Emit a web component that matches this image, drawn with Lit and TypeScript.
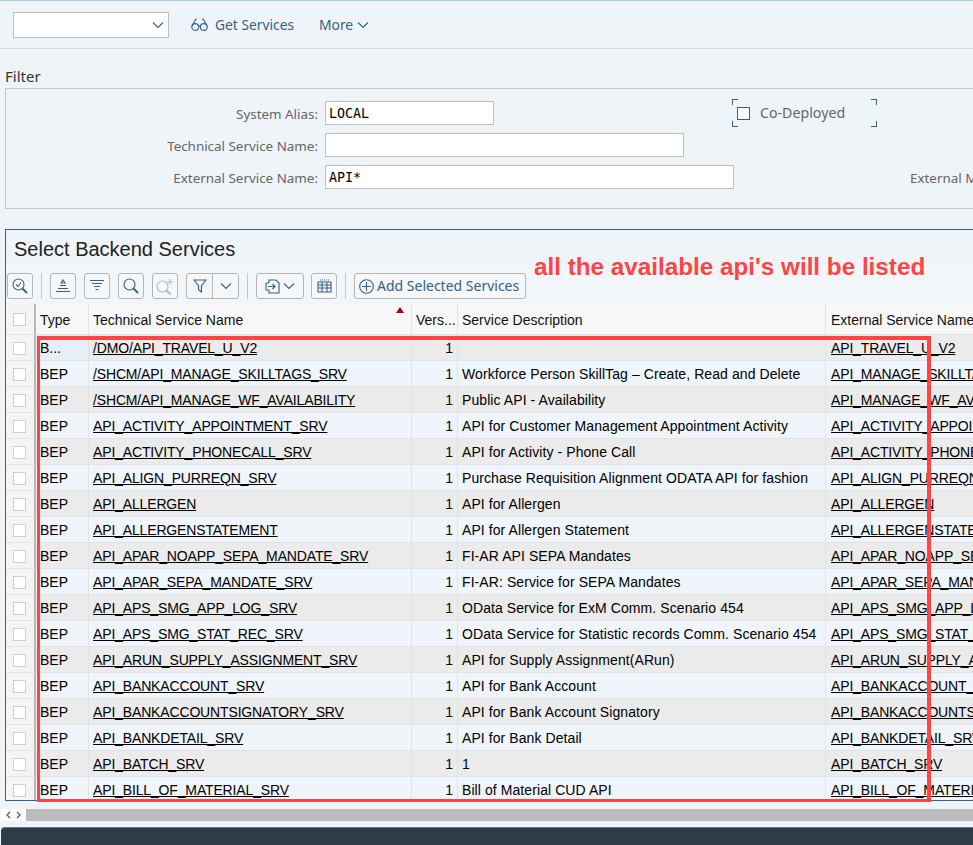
import { LitElement, html, css, svg } from "lit";
import { customElement } from "lit/decorators.js";

const rows: [string, string, string, string?, string?][] = [
  ["B...", "/DMO/API_TRAVEL_U_V2", "", "API_TRAVEL_U_V2"],
  ["BEP", "/SHCM/API_MANAGE_SKILLTAGS_SRV", "Workforce Person SkillTag – Create, Read and Delete", "API_MANAGE_SKILLTAGS_SRV"],
  ["BEP", "/SHCM/API_MANAGE_WF_AVAILABILITY", "Public API - Availability", "API_MANAGE_WF_AVAILABILITY"],
  ["BEP", "API_ACTIVITY_APPOINTMENT_SRV", "API for Customer Management Appointment Activity"],
  ["BEP", "API_ACTIVITY_PHONECALL_SRV", "API for Activity - Phone Call"],
  ["BEP", "API_ALIGN_PURREQN_SRV", "Purchase Requisition Alignment ODATA API for fashion"],
  ["BEP", "API_ALLERGEN", "API for Allergen"],
  ["BEP", "API_ALLERGENSTATEMENT", "API for Allergen Statement"],
  ["BEP", "API_APAR_NOAPP_SEPA_MANDATE_SRV", "FI-AR API SEPA Mandates"],
  ["BEP", "API_APAR_SEPA_MANDATE_SRV", "FI-AR: Service for SEPA Mandates"],
  ["BEP", "API_APS_SMG_APP_LOG_SRV", "OData Service for ExM Comm. Scenario 454"],
  ["BEP", "API_APS_SMG_STAT_REC_SRV", "OData Service for Statistic records Comm. Scenario 454"],
  ["BEP", "API_ARUN_SUPPLY_ASSIGNMENT_SRV", "API for Supply Assignment(ARun)"],
  ["BEP", "API_BANKACCOUNT_SRV", "API for Bank Account"],
  ["BEP", "API_BANKACCOUNTSIGNATORY_SRV", "API for Bank Account Signatory"],
  ["BEP", "API_BANKDETAIL_SRV", "API for Bank Detail"],
  ["BEP", "API_BATCH_SRV", "1"],
  ["BEP", "API_BILL_OF_MATERIAL_SRV", "Bill of Material CUD API"],
];

const icon = (w: number, h: number, body: unknown) => html`<svg class="ic" width=${w} height=${h} viewBox="0 0 ${w} ${h}" fill="none" stroke="#346187" stroke-width="1.1">${body}</svg>`;

const chevron = icon(12, 8, svg`<path d="M1 1.5 L6 6.5 L11 1.5"/>`);
const glasses = icon(17, 14, svg`<circle cx="4.2" cy="9" r="3.4"/><circle cx="12.8" cy="9" r="3.4"/><path d="M7.6 8.5 Q8.5 7.3 9.4 8.5 M1 8 L4.5 1.2 H6 M16 8 L12.5 1.2 H11"/>`);
const searchCheck = icon(16, 16, svg`<circle cx="6.5" cy="6.5" r="5.5"/><path d="M10.5 10.5 L15 15" stroke-width="1.8"/><path d="M4 6.5 L6 8.5 L9 4.5"/>`);
const sortAsc = icon(16, 14, svg`<path d="M8 1 L10 4 H6 Z M5 6.5 H11 M3 9.5 H13 M1 12.5 H15"/>`);
const sortDesc = icon(16, 14, svg`<path d="M1 1.5 H15 M3 4.5 H13 M5 7.5 H11 M6.5 10.5 H9.5 M8 13 V13"/>`);
const search = icon(16, 16, svg`<circle cx="6.5" cy="6.5" r="5.5"/><path d="M10.5 10.5 L15 15" stroke-width="1.8"/>`);
const searchPlus = html`<svg class="ic" width="18" height="17" viewBox="0 0 18 17" fill="none" stroke="#a9bccb" stroke-width="1.1"><circle cx="6.5" cy="8.5" r="5.5"/><path d="M10.5 12.5 L15 16.5" stroke-width="1.8"/><path d="M14 1 V7 M11 4 H17"/></svg>`;
const funnel = icon(14, 14, svg`<path d="M1 1 H13 L8.4 7 V13 L5.6 10.8 V7 Z"/>`);
const exportIc = icon(15, 15, svg`<path d="M4 4 V1 H11 L14 4 V14 H4 V11 M1 4 H4 M1 4 V11 H4 M3 7.5 H10 M7.5 5 L10 7.5 L7.5 10"/>`);
const grid = icon(15, 14, svg`<path d="M1 3 H14 V13 H1 Z M1 6 H14 M1 9 H14 M5 3 V13 M10 3 V13"/><path d="M3 1 H12" stroke-dasharray="1 1"/>`);
const plus = icon(15, 15, svg`<circle cx="7.5" cy="7.5" r="6.8"/><path d="M7.5 3 V12 M3 7.5 H12"/>`);

@customElement("app-root")
export class AppRoot extends LitElement {
  static styles = css`
    :host { display: block; width: 973px; height: 845px; overflow: hidden; position: relative; background: #eff4f9; font-family: "Liberation Sans", Arial, sans-serif; color: #000; }
    .ic { display: block; flex: none; }
    .top { height: 47px; border-top: 1px solid #a9c9e8; border-bottom: 1px solid #c9def2; display: flex; align-items: center; padding-left: 13px; font-family: "Noto Sans", sans-serif; font-size: 13.8px; color: #346187; box-sizing: content-box; }
    .select { height: 24px; background: #fff; border: 1px solid #bfbfbf; display: flex; align-items: center; justify-content: flex-end; padding-right: 4px; box-sizing: content-box; width: 150px; margin-top: 1px; }
    .get { display: flex; align-items: center; gap: 7px; margin-left: 22px; }
    .more { display: flex; align-items: center; gap: 4px; margin-left: 25px; }
    .filter-title { font-family: "Noto Sans", sans-serif; font-size: 15px; color: #333; padding: 17px 0 0 5px; height: 22px; line-height: 20px; }
    .filter { margin-left: 5px; border: 1px solid #c8c8c8; border-right: none; padding-top: 12px; box-sizing: border-box; height: 121px; display: flex; flex-direction: column; gap: 8px; font-family: "Noto Sans", sans-serif; font-size: 13.4px; color: #666; white-space: nowrap; }
    .frow { display: flex; align-items: center; height: 24px; }
    .flabel { width: 312px; text-align: right; flex: none; padding-top: 2px; box-sizing: border-box; }
    .input { margin-left: 7px; height: 24px; box-sizing: border-box; background: #fff; border: 1px solid #bfbfbf; font-family: "DejaVu Sans Mono", monospace; font-size: 13.33px; color: #000; line-height: 24px; padding-left: 3px; flex: none; }
    .w1 { width: 169px; } .w2 { width: 359px; } .w3 { width: 409px; }
    .codep { position: relative; margin-left: 238px; width: 145px; height: 28px; display: flex; align-items: center; gap: 10px; padding-left: 5px; box-sizing: border-box; flex: none; margin-top: -1px; margin-bottom: -1px; font-size: 14.2px; line-height: 26px; }
    .cd-label { margin-top: -1px; }
    .cd-box { width: 13px; height: 13px; box-sizing: border-box; border: 1px solid #346187; background: #fff; }
    .cn { position: absolute; width: 5px; height: 5px; border: 0 solid #346187; }
    .tl { left: 0; top: 0; border-width: 1px 0 0 1px; } .tr { right: 0; top: 0; border-width: 1px 1px 0 0; }
    .bl { left: 0; bottom: 0; border-width: 0 0 1px 1px; } .br { right: 0; bottom: 0; border-width: 0 1px 1px 0; }
    .extm { margin-left: 176px; padding-top: 2px; }
    .panel { margin: 20px 0 0 5px; border-top: 1px solid #346187; border-left: 1px solid #346187; border-bottom: 1px solid #346187; height: 572px; box-sizing: border-box; display: flex; flex-direction: column; position: relative; width: 968px; }
    .ptitle { height: 38px; padding-left: 8px; font-size: 20px; line-height: 38px; color: #222; flex: none; }
    .tbar { height: 36px; background: #f3f6f9; display: flex; align-items: center; padding-left: 1px; flex: none; }
    .btn { height: 26px; min-width: 26px; box-sizing: border-box; border: 1px solid #b5b5b5; border-radius: 3px; display: flex; align-items: center; justify-content: center; flex: none; background: #f5f7f9; margin-right: 8px; color: #346187; font-family: "Noto Sans", sans-serif; font-size: 14px; }
    .btn.split { width: 53px; padding: 0; }
    .btn.split > div { flex: 1; height: 100%; display: flex; align-items: center; justify-content: center; }
    .btn.split > div + div { border-left: 1px solid #b5b5b5; }
    .btn.exp { width: 48px; gap: 3px; margin-right: 7px; }
    .btn.add { width: 172px; gap: 3px; margin-right: 0; white-space: nowrap; padding: 0 0 0 4px; justify-content: flex-start; }
    .add-label { margin-top: -2px; }
    .sep { width: 1px; height: 26px; background: #c5c5c5; margin-right: 8px; flex: none; }
    .gr { display: grid; grid-template-columns: 30px 53px 323px 46px 368px 300px; flex: none; }
    .gr > div { box-sizing: border-box; border-right: 1px solid #e3e3e3; border-bottom: 1px solid #e3e3e3; padding: 0 4px; display: flex; align-items: center; white-space: nowrap; overflow: hidden; font-size: 14px; }
    .gr > .chk { padding: 0 1px 0 0; justify-content: center; background: #f4f4f4; border-right: 2px solid #b9b9b9; }
    .gr > .ext { padding-left: 5px; }
    .cb { width: 13px; height: 13px; box-sizing: border-box; background: #fff; border: 1px solid #cfcfcf; flex: none; }
    .row .cb { margin-top: 1px; }
    .head { height: 31px; background: #f7f7f7; }
    .head > div { background: #f7f7f7; color: #111; position: relative; padding-top: 1px; }
    .tri { position: absolute; right: 7px; top: 3px; width: 0; height: 0; border-left: 4px solid transparent; border-right: 4px solid transparent; border-bottom: 6px solid #b8000a; }
    .body { flex: 1; overflow: hidden; min-height: 0; }
    .row { height: 26px; }
    .row.odd { background: #ebebeb; }
    .row.even { background: #eff5fa; }
    .row .hl { background: #e6eef7; }
    .u { text-decoration: underline; color: #000; letter-spacing: -0.15px; }
    .desc { letter-spacing: 0.08px; }
    .num { justify-content: flex-end; }
    .scroll { display: flex; height: 12px; margin-top: 8px; flex: none; }
    .arrows { width: 26px; background: #fff; display: flex; align-items: center; justify-content: center; gap: 5px; flex: none; }
    .track { flex: 1; background: #bcbcbc; }
    .dock { height: 19px; margin: 6px 0 0 1px; background: #2f3b49; border-radius: 4px 0 0 0; border-top: 1px solid #6c7580; box-sizing: border-box; }
    .note { position: absolute; left: 534px; top: 254px; font-size: 24.25px; line-height: 26px; font-weight: 700; color: #ff4444; white-space: nowrap; }
    .mark { position: absolute; left: 37px; top: 336px; width: 894px; height: 466px; box-sizing: border-box; border: solid #ff4444; border-width: 4px 4px 3px 3px; pointer-events: none; }
  `;

  render() {
    return html`
      <div class="top">
        <div class="select">${chevron}</div>
        <div class="get">${glasses}<span>Get Services</span></div>
        <div class="more"><span>More</span>${chevron}</div>
      </div>
      <div class="filter-title">Filter</div>
      <div class="filter">
        <div class="frow">
          <div class="flabel">System Alias:</div><div class="input w1">LOCAL</div>
          <div class="codep"><span class="cn tl"></span><span class="cn tr"></span><span class="cn bl"></span><span class="cn br"></span><div class="cd-box"></div><span class="cd-label">Co-Deployed</span></div>
        </div>
        <div class="frow"><div class="flabel">Technical Service Name:</div><div class="input w2"></div></div>
        <div class="frow"><div class="flabel">External Service Name:</div><div class="input w3">API*</div><div class="extm">External Media</div></div>
      </div>
      <div class="panel">
        <div class="ptitle">Select Backend Services</div>
        <div class="tbar">
          <div class="btn">${searchCheck}</div><div class="sep"></div>
          <div class="btn">${sortAsc}</div><div class="btn">${sortDesc}</div><div class="btn">${search}</div><div class="btn">${searchPlus}</div>
          <div class="btn split"><div>${funnel}</div><div>${chevron}</div></div><div class="sep"></div>
          <div class="btn exp">${exportIc}${chevron}</div><div class="btn">${grid}</div><div class="sep"></div>
          <div class="btn add">${plus}<span class="add-label">Add Selected Services</span></div>
        </div>
        <div class="gr head">
          <div class="chk"><span class="cb"></span></div><div>Type</div><div>Technical Service Name<span class="tri"></span></div><div>Vers...</div><div>Service Description</div><div class="ext">External Service Name</div>
        </div>
        <div class="body">
          ${rows.map((r, i) => html`<div class="gr row ${i % 2 ? "even" : "odd"}">
            <div class="chk"><span class="cb"></span></div>
            <div class=${i === 0 ? "hl" : ""}>${r[0]}</div>
            <div><span class="u">${r[1]}</span></div>
            <div class="num">1</div>
            <div class="desc">${r[2]}</div>
            <div class="ext"><span class="u">${r[3] ?? r[1]}</span></div>
          </div>`)}
        </div>
      </div>
      <div class="scroll">
        <div class="arrows">
          <svg class="ic" width="5" height="8" viewBox="0 0 5 8" fill="none" stroke="#346187" stroke-width="1.2"><path d="M4 1 L1 4 L4 7"/></svg>
          <svg class="ic" width="5" height="8" viewBox="0 0 5 8" fill="none" stroke="#346187" stroke-width="1.2"><path d="M1 1 L4 4 L1 7"/></svg>
        </div>
        <div class="track"></div>
      </div>
      <div class="dock"></div>
      <div class="note">all the available api's will be listed</div>
      <div class="mark"></div>
    `;
  }
}
